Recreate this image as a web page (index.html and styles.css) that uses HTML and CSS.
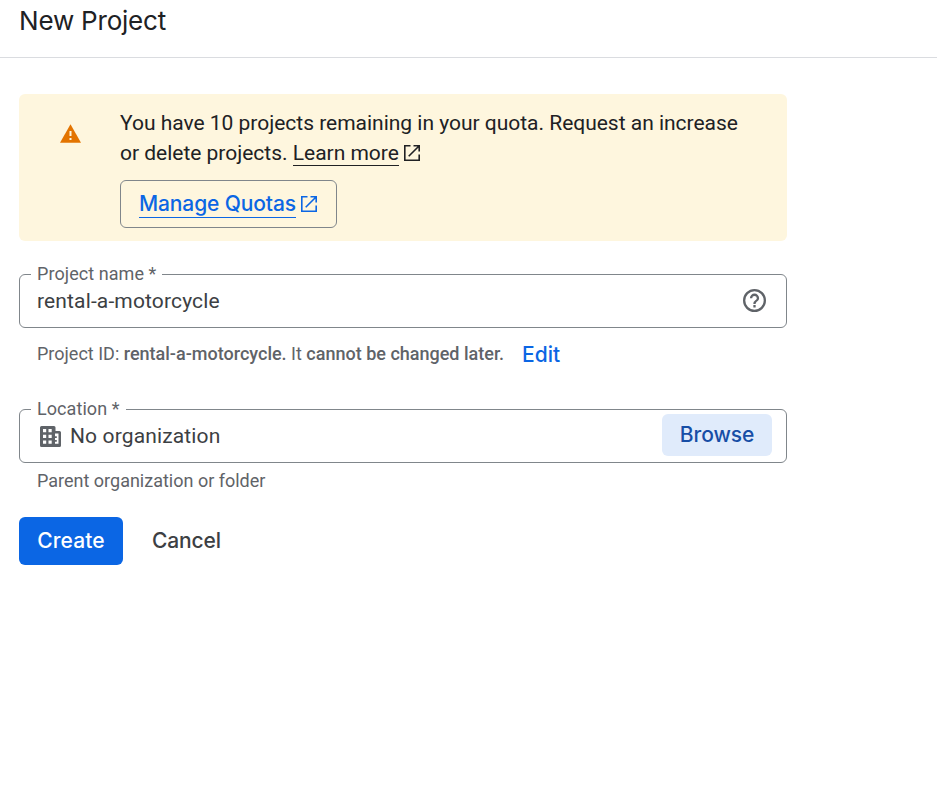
FILE: index.html
```html
<!DOCTYPE html>
<html lang="en">
<head>
<meta charset="utf-8">
<title>New Project</title>
<link rel="stylesheet" href="styles.css">
</head>
<body>
<header class="header"><h1 class="title">New Project</h1></header>
<main class="content">
  <section class="notice">
    <svg class="warning-icon" viewBox="0 0 21 19"><path fill="#e37400" d="M0 18.700 10.500.3 21 18.700z"/><path fill="#fdf6de" d="M9.500 7h2v5h-2zM9.500 14h2v2h-2z"/></svg>
    <div class="notice-body">
      <p class="notice-text">You have 10 projects remaining in your quota. Request an increase<br>or delete projects. <a class="learn"><span class="link-text">Learn more</span><svg class="open-icon" viewBox="0 0 16 16" fill="none" stroke="currentColor" stroke-width="1.6"><path d="M6.5.8H.8v14.4h14.4V9.5M9.5.8h5.7v5.7M15 1 4.700 11.300"/></svg></a></p>
      <a class="quotas"><span class="quotas-text">Manage Quotas</span><svg class="open-icon" viewBox="0 0 16 16" fill="none" stroke="currentColor" stroke-width="1.6"><path d="M6.5.8H.8v14.4h14.4V9.5M9.5.8h5.7v5.7M15 1 4.700 11.300"/></svg></a>
    </div>
  </section>
  <div class="field name-field">
    <label class="label name-label">Project name *</label>
    <span class="value name-value">rental-a-motorcycle</span>
    <svg class="help-icon" viewBox="2 2 20 20"><path fill="currentColor" d="M11 18h2v-2h-2zm1-16a10 10 0 1 0 0 20 10 10 0 0 0 0-20m0 18a8 8 0 1 1 0-16 8 8 0 0 1 0 16m0-14a4 4 0 0 0-4 4h2a2 2 0 1 1 4 0c0 2-3 1.750-3 5h2c0-2.250 3-2.500 3-5a4 4 0 0 0-4-4"/></svg>
  </div>
  <div class="hint id-hint"><span>Project ID: <b class="project-id">rental-a-motorcycle.</b> It <b class="fixed">cannot be changed later.</b></span><a class="edit">Edit</a></div>
  <div class="field location-field">
    <label class="label location-label">Location *</label>
    <svg class="org-icon" viewBox="0 0 21 21"><path fill="currentColor" fill-rule="evenodd" d="M1.500 0H14a1.500 1.500 0 0 1 1.500 1.500V5h4A1.500 1.500 0 0 1 21 6.500v13a1.500 1.500 0 0 1-1.500 1.500h-18A1.500 1.500 0 0 1 0 19.500v-18A1.500 1.500 0 0 1 1.500 0zM3 3h3.200v3.200H3zm5.500 0h3.200v3.200H8.500zM3 8.800h3.200V12H3zm5.500 0h3.200V12H8.500zM3 14.600h3.200v3.200H3zm5.500 0h3.200v3.200H8.500zM15 7.500h3.500v10.300H15v-2h1.800v-1.800H15v-2h1.800v-1.800H15z"/></svg>
    <span class="value org-value">No organization</span>
    <button class="browse">Browse</button>
  </div>
  <div class="hint parent-hint">Parent organization or folder</div>
  <div class="actions"><button class="create">Create</button><button class="cancel">Cancel</button></div>
</main>
</body>
</html>
```
FILE: styles.css
```css
* { box-sizing: border-box; }
body { margin: 0; background: #fff; color: #202124; font-family: Roboto, sans-serif; font-size: 21px; line-height: 30px; }
button { border: 0; background: none; padding: 0; }
.header { height: 58px; border-bottom: 1px solid #dadce0; padding: 3px 19px 0; }
.title { margin: 0; font: 400 26px/36px Inter, sans-serif; letter-spacing: -0.2px; }
.content { width: 787px; padding: 36px 0 0 19px; }
.notice { display: flex; height: 147px; padding: 14px 0 0 41px; border-radius: 6px; background: #fef6de; }
.warning-icon { width: 21px; height: 19px; margin: 16px 39px 0 0; flex: none; }
.notice-body { display: flex; flex-direction: column; align-items: flex-start; }
.notice-text { margin: 0 0 12px; letter-spacing: -0.015px; white-space: nowrap; }
.link-text { display: inline-block; line-height: 26px; height: 26px; border-bottom: 1px solid currentColor; }
.open-icon { width: 16px; height: 16px; margin-left: 5px; flex: none; }
.learn .open-icon { vertical-align: -1px; }
.quotas { display: flex; align-items: center; width: 217px; height: 48px; padding-left: 18px; border: 1px solid #80868b; border-radius: 6px; color: #0b66e4; font: 500 21px/28px Inter, sans-serif; letter-spacing: -0.12px; }
.quotas .open-icon { margin-top: -1px; }
.quotas-text { height: 28px; border-bottom: 1px solid currentColor; white-space: nowrap; }
.field { position: relative; display: flex; align-items: center; height: 54px; border: 1px solid #80868b; border-radius: 6px; color: #3c4043; }
.name-field { margin-top: 33px; padding: 0 20px 0 17px; }
.location-field { margin-top: 39px; padding: 0 14px 0 20px; }
.label { position: absolute; left: 11px; top: -12px; padding: 0 6px; background: #fff; color: #5f6368; font-size: 18px; line-height: 22px; letter-spacing: 0.07px; white-space: nowrap; }
.value { letter-spacing: 0.14px; }
.help-icon { width: 23px; height: 23px; margin: -2px 0 0 auto; color: #5f6368; }
.hint { padding-left: 18px; color: #5f6368; font-size: 18px; line-height: 24px; white-space: nowrap; }
.hint b { font-weight: 500; }
.id-hint { display: flex; align-items: center; height: 24px; margin-top: 18px; gap: 18px; }
.id-hint > span { margin-top: -8px; }
.edit { margin-top: -6px; color: #0b66e4; font: 500 21px/24px Inter, sans-serif; }
.org-icon { width: 21px; height: 21px; margin-right: 9px; color: #5f6368; }
.browse { width: 110px; height: 42px; margin: -3px 0 0 auto; border-radius: 6px; background: #e0ebfb; color: #174ea6; font: 500 21px/42px Inter, sans-serif; letter-spacing: -0.1px; }
.parent-hint { margin-top: 6px; }
.actions { display: flex; margin-top: 24px; }
.create, .cancel { height: 48px; font: 500 21px/48px Inter, sans-serif; letter-spacing: -0.15px; }
.create { width: 104px; border-radius: 6px; background: #0b66e4; color: #fff; letter-spacing: 0.1px; }
.cancel { margin-left: 29px; color: #3c4043; }
```
